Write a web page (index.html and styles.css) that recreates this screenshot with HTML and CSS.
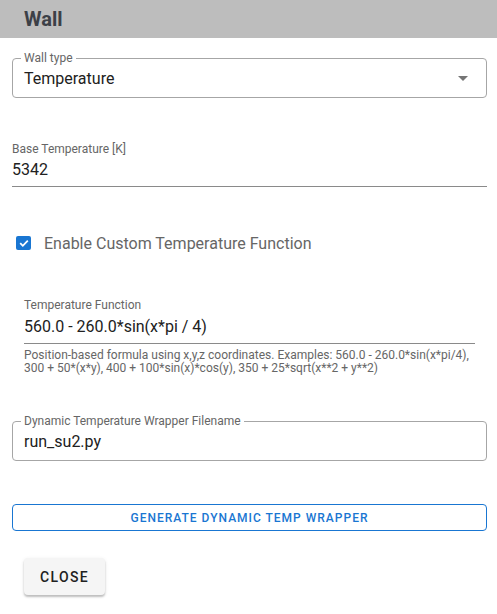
FILE: index.html
```html
<!DOCTYPE html>
<html>
<head>
<meta charset="utf-8">
<link rel="stylesheet" href="styles.css">
</head>
<body>
<div class="dialog">
  <div class="header">Wall</div>
  <div class="content">
    <div class="outlined select">
      <span class="olabel">Wall type</span>
      <span class="ovalue">Temperature</span>
      <svg class="arrow" width="10" height="5" viewBox="0 0 10 5"><path d="M0 0 L10 0 L5 5 Z" fill="#757575"/></svg>
    </div>

    <div class="std base">
      <div class="slabel">Base Temperature [K]</div>
      <div class="svalue">5342</div>
    </div>

    <label class="check">
      <span class="box"><svg width="12" height="12" viewBox="0 0 12 12"><path d="M2.2 6.2 L4.8 8.8 L9.8 3.6" fill="none" stroke="#fff" stroke-width="1.8"/></svg></span>
      <span class="ctext">Enable Custom Temperature Function</span>
    </label>

    <div class="indent">
      <div class="std func">
        <div class="slabel">Temperature Function</div>
        <div class="svalue">560.0 - 260.0*sin(x*pi / 4)</div>
      </div>
      <div class="helper">Position-based formula using x,y,z coordinates. Examples: 560.0 - 260.0*sin(x*pi/4), 300 + 50*(x*y), 400 + 100*sin(x)*cos(y), 350 + 25*sqrt(x**2 + y**2)</div>
    </div>

    <div class="outlined wrapper">
      <span class="olabel">Dynamic Temperature Wrapper Filename</span>
      <span class="ovalue">run_su2.py</span>
    </div>

    <button class="obtn">GENERATE DYNAMIC TEMP WRAPPER</button>
  </div>
  <div class="actions">
    <button class="close">CLOSE</button>
  </div>
</div>
</body>
</html>
```
FILE: styles.css
```css
* { box-sizing: border-box; }
html, body { margin: 0; padding: 0; background: #fff; }
body { font-family: Roboto, "Noto Sans", sans-serif; color: #212121; width: 497px; height: 614px; overflow: hidden; }
.header {
  height: 38px;
  background: #bdbdbd;
  padding-left: 24px;
  font-size: 20px;
  font-weight: 700;
  line-height: 38px;
  color: #3c4047;
}
.content { padding: 20px 10px 0 12px; }
.outlined {
  position: relative;
  height: 40px;
  border: 1px solid #a6a6a6;
  border-radius: 4px;
  display: flex;
  align-items: center;
  padding-left: 11px;
}
.olabel {
  position: absolute;
  left: 8px;
  top: -8px;
  padding: 0 3px;
  background: #fff;
  font-size: 12px;
  line-height: 14px;
  color: #666;
}
.ovalue { font-size: 16px; color: #212121; padding-top: 1px; }
.arrow { position: absolute; right: 18px; top: 17px; }
.std { border-bottom: 1px solid #8a8a8a; }
.base { margin-top: 43px; padding-bottom: 6px; }
.slabel { font-size: 12px; line-height: 16px; color: #666; }
.svalue { font-size: 16px; line-height: 20px; margin-top: 3px; color: #212121; }
.check { display: flex; align-items: center; margin-top: 48px; padding-left: 4px; height: 16px; }
.box {
  width: 15px; height: 14px; border-radius: 2px; background: #1976d2;
  display: flex; align-items: center; justify-content: center;
}
.ctext { margin-left: 13px; font-size: 16px; color: #666; }
.indent { padding: 0 12px; margin-top: 46px; }
.func { padding-bottom: 6px; }
.func .svalue { font-size: 16px; line-height: 21px; }
.helper { font-size: 12px; line-height: 13px; color: #666; margin-top: 5px; }
.wrapper { margin-top: 46px; }
.obtn {
  display: block;
  width: 100%;
  height: 27px;
  margin-top: 43px;
  border: 1px solid #1976d2;
  border-radius: 4px;
  background: #fff;
  color: #1976d2;
  font-family: Roboto, sans-serif;
  font-size: 12px;
  font-weight: 500;
  letter-spacing: 1px;
}
.actions { padding: 27px 24px 0; }
.close {
  width: 81px; height: 37px;
  border: none; border-radius: 4px;
  background: #f5f5f5;
  box-shadow: 0 2px 2px rgba(0,0,0,0.22), 0 1px 4px rgba(0,0,0,0.08);
  font-family: Roboto, sans-serif;
  font-size: 14px; font-weight: 500; letter-spacing: 1.3px;
  color: #212121;
}
```
